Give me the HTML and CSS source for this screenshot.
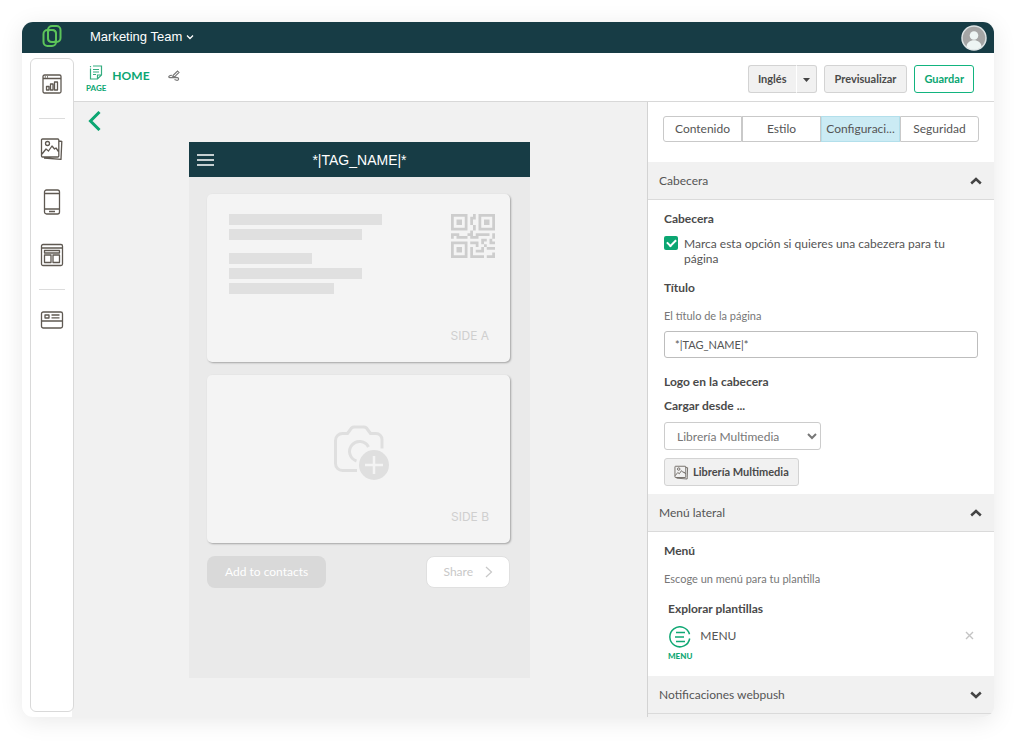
FILE: index.html
```html
<!DOCTYPE html>
<html lang="es">
<head>
<meta charset="utf-8">
<meta name="viewport" content="width=device-width, initial-scale=1">
<title>Marketing Team</title>
<link rel="stylesheet" href="styles.css">
</head>
<body>
<svg class="defs" aria-hidden="true">
  <symbol id="gallery" viewBox="0 0 24 24">
    <path d="M2.500 2h15.300a1 1 0 0 1 1 1v16a1 1 0 0 1-1 1H2.500a1 1 0 0 1-1-1V3a1 1 0 0 1 1-1zM2 17l4-5 2.500 2 3.500-5 2.500 3 1.500-1 2.500 3.500M18.800 4l3 .400-.800 18-17-1.400"/>
    <circle cx="7.500" cy="6.500" r="2"/>
  </symbol>
</svg>
<div class="app">
  <header class="topbar">
    <a class="logo" href="#" aria-label="Inicio">
      <svg width="20" height="24" viewBox="0 0 20 24"><g fill="none" stroke="#5cc45a" stroke-width="2"><rect x="6" y="2" width="12.500" height="16" rx="4"/><rect x="1.500" y="6" width="12.500" height="16" rx="4"/><rect x="6" y="6" width="8" height="12" rx="3" stroke-width="1.500"/></g></svg>
    </a>
    <button class="team" type="button">Marketing Team
      <svg width="8" height="6" viewBox="0 0 8 6"><path d="M1 1.500l3 3 3-3" fill="none" stroke="#fff" stroke-width="1.300"/></svg>
    </button>
    <button class="avatar" type="button" aria-label="Cuenta">
      <svg width="26" height="26" viewBox="0 0 26 26"><circle cx="13" cy="13" r="12" fill="#a5a5a5" stroke="#dce2e3" stroke-width="1.500"/><circle cx="13" cy="10.500" r="4.300" fill="#eef5f4"/><path d="M5.500 22c0-9 15-9 15 0a12 12 0 0 1-15 0z" fill="#eef5f4"/></svg>
    </button>
  </header>

  <div class="body">
    <div class="rail">
      <nav class="tools" aria-label="Herramientas">
        <a href="#" aria-label="Panel"><svg width="20" height="20" viewBox="0 0 20 20"><rect x="1" y="1" width="18" height="18" rx="1.500"/><path d="M1 4.500h18M2.800 2.800h1M5 2.800h1M4.500 12.500h2.500v3.500h-2.500zM8.500 10h2.500v6h-2.500zM12.500 8h3v8h-3z"/></svg></a>
        <hr>
        <a href="#" aria-label="Multimedia"><svg width="24" height="24"><use href="#gallery"/></svg></a>
        <a href="#" aria-label="Móvil"><svg width="18" height="26" viewBox="0 0 18 26"><rect x="1.500" y="1" width="15" height="24" rx="2"/><path d="M1.500 4.500h15M1.500 20h15M6 22.500h6"/></svg></a>
        <a href="#" aria-label="Plantillas"><svg width="24" height="24" viewBox="0 0 24 24"><rect x="1.500" y="1.500" width="21" height="21" rx="1.500"/><path d="M1.500 5h21M4.500 7.500h15v2.500h-15zM4.500 12h6.500v7.500h-6.500zM13 12h6.500v7.500H13z"/></svg></a>
        <hr>
        <a href="#" aria-label="Tarjetas"><svg width="24" height="18" viewBox="0 0 24 18"><rect x="1.500" y="1" width="21" height="16" rx="1.800"/><path d="M1.500 10h21M5 4h4v3h-4zM11.500 4h8M11.500 6.800h8"/></svg></a>
      </nav>
    </div>

    <main class="main">
      <div class="pagebar">
        <div class="page-kind">
          <svg width="14" height="15" viewBox="0 0 14 15"><path d="M4 1h8.500v9l-4 4H1.500V3.500M12.500 10h-4v4M1.500 1v1.200M4 4.500h6M4 7h6M4 9.500h3" fill="none" stroke="#35ad80" stroke-width="1.200"/></svg>
          <span>PAGE</span>
        </div>
        <h1>HOME</h1>
        <button class="edit" type="button" aria-label="Editar nombre"><svg width="12" height="12" viewBox="0 0 12 12"><path d="M5 5.500L9.500 1 11 2.500 6.800 6.600l-2 .400zM4 5.200C1 5.200-.5 7.300 2 7.600l6-.200c3.500 0 3.300 3.400.500 2.900L6.500 9.500" fill="none" stroke="#777" stroke-width="1.100"/></svg></button>
        <div class="actions">
          <div class="split"><button class="btn" type="button">Inglés</button><button class="btn caret" type="button" aria-label="Elegir idioma"><svg width="7" height="4" viewBox="0 0 7 4"><path d="M0 0h7l-3.500 4z" fill="#444"/></svg></button></div>
          <button class="btn" type="button">Previsualizar</button>
          <button class="btn save" type="button">Guardar</button>
        </div>
      </div>

      <div class="workspace">
        <section class="canvas">
          <button class="back" type="button" aria-label="Volver"><svg width="14" height="20" viewBox="0 0 14 20"><path d="M11.500 1L2.500 10l9 9" fill="none" stroke="#0ba672" stroke-width="3"/></svg></button>
          <div class="phone">
            <div class="phone-head">
              <svg width="17" height="12" viewBox="0 0 17 12"><path d="M0 1h17M0 6h17M0 11h17" stroke="#fff" stroke-width="1.400"/></svg>
              <span>*|TAG_NAME|*</span>
            </div>
            <div class="phone-body">
              <article class="card side-a">
                <div class="bars"><i class="w1"></i><i class="w2"></i><i class="w3"></i><i class="w2"></i><i class="w4"></i></div>
                <svg class="qr" width="44" height="44" viewBox="0 0 16 16"><path fill="none" stroke="#cdcdcd" stroke-width="1" d="M.5.500h5v5h-5zM10.500.500h5v5h-5zM.5 10.500h5v5h-5zM2 3h2M2 2.500h2M2 3.500h2M12 2.500h2M12 3.500h2M2 12.500h2M2 13.500h2M8 .500h1M7 1.500h2M7 2.500h1M7 3.500h1M8 4.500h1M8 5.500h1M7 6.500h1M0 7.500h3M6 7.500h2M9 7.500h5M15 7.500h1M0 8.500h1M2 8.500h4M7 8.500h3M15 8.500h1M11 9.500h2M14 9.500h1M7 10.500h3M11 10.500h1M14 10.500h2M9 11.500h1M12 11.500h1M7 12.500h1M11 12.500h1M13 12.500h3M7 13.500h1M9 13.500h3M7 14.500h1M15 14.500h1M7 15.500h5M13 15.500h3"/></svg>
                <span class="side">SIDE A</span>
              </article>
              <article class="card side-b">
                <svg width="56" height="55" viewBox="0 0 56 55"><g fill="none" stroke="#dfdfdf" stroke-width="3"><path d="M24 45.500H9.500a7 7 0 0 1-7-7v-23a7 7 0 0 1 7-7h5l4-5.500q1-1 3-1h9q2 0 3 1l4 5.500h5.500a6 6 0 0 1 6 6V23.500"/><path d="M35.500 22A10 10 0 1 0 23.500 36"/></g><circle cx="41" cy="40" r="15" fill="#dfdfdf"/><path d="M41 31v18M32 40h18" stroke="#f4f4f4" stroke-width="2.500"/></svg>
                <span class="side">SIDE B</span>
              </article>
              <div class="phone-actions">
                <button class="add" type="button">Add to contacts</button>
                <button class="share" type="button">Share <svg width="8" height="12" viewBox="0 0 8 12"><path d="M1 1l5.500 5L1 11" fill="none" stroke="#c8c8c8" stroke-width="1.200"/></svg></button>
              </div>
            </div>
          </div>
        </section>

        <aside class="panel">
          <div class="tabs" role="tablist">
            <button type="button" role="tab">Contenido</button>
            <button type="button" role="tab">Estilo</button>
            <button type="button" role="tab" aria-selected="true" class="active">Configuraci...</button>
            <button type="button" role="tab">Seguridad</button>
          </div>

          <button class="section-head" type="button" aria-expanded="true">Cabecera
            <svg width="12" height="8" viewBox="0 0 12 8"><path d="M1.200 6.500L6 2l4.800 4.500" fill="none" stroke="#444" stroke-width="2.500"/></svg>
          </button>
          <div class="section">
            <h2>Cabecera</h2>
            <label class="check"><input type="checkbox" checked><span>Marca esta opción si quieres una cabezera para tu página</span></label>
            <h2><label for="title">Título</label></h2>
            <p id="title-help">El título de la página</p>
            <input id="title" class="field" type="text" value="*|TAG_NAME|*" aria-describedby="title-help">
            <h2 class="logo-title">Logo en la cabecera</h2>
            <h2 class="source-title"><label for="source">Cargar desde ...</label></h2>
            <select id="source" class="source"><option>Librería Multimedia</option></select>
            <button class="btn library" type="button"><svg width="15" height="15"><use href="#gallery"/></svg>Librería Multimedia</button>
          </div>

          <button class="section-head" type="button" aria-expanded="true">Menú lateral
            <svg width="12" height="8" viewBox="0 0 12 8"><path d="M1.200 6.500L6 2l4.800 4.500" fill="none" stroke="#444" stroke-width="2.500"/></svg>
          </button>
          <div class="section menu-section">
            <h2>Menú</h2>
            <p>Escoge un menú para tu plantilla</p>
            <h2 class="templates">Explorar plantillas</h2>
            <div class="menu-item">
              <div class="menu-icon"><svg width="22" height="22" viewBox="0 0 22 22"><g fill="none" stroke="#10a874" stroke-width="1.500"><path d="M20.500 8.200A10 10 0 1 0 20.700 12.500"/><path d="M7 6.500h9M6 11h9M7 15.500h9" stroke-width="1.700"/></g></svg><span>MENU</span></div>
              <span class="menu-name">MENU</span>
              <button class="remove" type="button" aria-label="Quitar"><svg width="9" height="9" viewBox="0 0 9 9"><path d="M1 1l7 7M8 1l-7 7" stroke="#c4c4c4" stroke-width="1.400"/></svg></button>
            </div>
          </div>

          <button class="section-head" type="button" aria-expanded="false">Notificaciones webpush
            <svg width="12" height="8" viewBox="0 0 12 8"><path d="M1.200 1.500L6 6l4.800-4.500" fill="none" stroke="#444" stroke-width="2.500"/></svg>
          </button>
        </aside>
      </div>
    </main>
  </div>
</div>
</body>
</html>
```
FILE: styles.css
```css
* { box-sizing: border-box; }
body {
  margin: 0;
  min-height: 100vh;
  padding: 22px 26px 27px 22px;
  display: flex;
  background: #fff;
  color: #555;
  font: 12px/16px Lato, sans-serif;
}
button, input, select { font: inherit; color: inherit; margin: 0; }
button { padding: 0; border: 0; background: none; cursor: pointer; }
h1, h2, p { margin: 0; }
svg { display: block; flex: none; }
.defs { position: absolute; width: 0; height: 0; }

.app {
  flex: 1;
  min-width: 0;
  display: flex;
  flex-direction: column;
  border-radius: 11px;
  overflow: hidden;
  background: #fff;
  box-shadow: 0 4px 24px rgba(0, 0, 0, .09);
}

/* Top bar */
.topbar {
  height: 31px;
  display: flex;
  align-items: center;
  padding: 0 7px 0 20px;
  background: #173c45;
}
.logo { margin-bottom: 4px; }
.team {
  display: flex;
  align-items: center;
  gap: 4px;
  margin: 0 auto 2px 28px;
  color: #fff;
  font: 13px/16px "Liberation Sans", Arial, sans-serif;
}

/* Tool rail */
.body { flex: 1; display: flex; }
.rail { width: 50px; flex: none; padding: 5px 0 5px 8px; display: flex; }
.tools {
  position: relative;
  z-index: 1;
  flex: none;
  width: 44px;
  display: flex;
  flex-direction: column;
  align-items: center;
  padding-top: 15px;
  border: 1px solid #d9d9d9;
  border-radius: 6px;
  background: #fff;
}
.tools a { height: 20px; margin-bottom: 33px; display: flex; align-items: center; }
.tools hr { width: 26px; margin: -9px 0 20px; border: 0; border-top: 1px solid #dcdcdc; }
.tools svg, .library svg { fill: none; stroke: #5f5952; stroke-width: 1.300; stroke-linejoin: round; }

/* Page bar */
.main { flex: 1; min-width: 0; display: flex; flex-direction: column; }
.pagebar {
  height: 49px;
  display: flex;
  align-items: center;
  padding: 3px 20px 0 14px;
  border-bottom: 1px solid #d8d8d8;
}
.page-kind { display: flex; flex-direction: column; align-items: center; gap: 3px; color: #0ba672; font-size: 8px; line-height: 10px; font-weight: 700; }
.pagebar h1 { margin: 0 18px 5px 6px; font-size: 12px; line-height: 16px; color: #0ba672; }
.edit { margin-bottom: 5px; }
.actions { margin-left: auto; display: flex; gap: 7px; }
.split { display: flex; }
.btn {
  height: 28px;
  padding: 0 10px;
  border: 1px solid #d3d3d3;
  border-radius: 3px;
  background: #f1f1f1;
  color: #4a4a4a;
  font-size: 11px;
  line-height: 16px;
  font-weight: 700;
}
.split .btn:first-child { padding: 0 9px; border-right-color: #fff; border-radius: 3px 0 0 3px; }
.split .caret { padding: 2px 6px 0; border-left: 0; border-radius: 0 3px 3px 0; }
.btn.save { padding: 0 9px; border-color: #12b47f; background: #fff; color: #0ba672; }

/* Canvas */
.workspace { flex: 1; display: flex; background: #f1f1f1; }
.canvas { flex: 1; position: relative; display: flex; justify-content: center; align-items: flex-start; padding: 40px 20px 20px; }
.back { position: absolute; left: 16px; top: 9px; }
.phone { width: 341px; min-height: 536px; background: #eaeaea; }
.phone-head {
  height: 35px;
  display: grid;
  grid-template-columns: 17px 1fr 17px;
  align-items: center;
  padding: 0 8px;
  background: #173c45;
  color: #fff;
  font: 14px/16px "Liberation Sans", Arial, sans-serif;
  text-align: center;
}
.phone-body { padding: 17px 20px 20px 18px; display: flex; flex-direction: column; gap: 13px; }
.card {
  position: relative;
  height: 168px;
  border-radius: 5px;
  background: #f4f4f4;
  box-shadow: 1px 1px 2px rgba(0, 0, 0, .3);
}
.side-a { display: flex; justify-content: space-between; padding: 20px 15px 0 22px; }
.side-b { display: flex; justify-content: center; padding: 50px 0 0 4px; }
.bars { display: flex; flex-direction: column; gap: 4px; }
.bars i { height: 11px; background: #e0e0e0; }
.w1 { width: 153px; }
.w2 { width: 133px; }
.w3 { width: 83px; margin-top: 9px; }
.w4 { width: 105px; }
.side { position: absolute; right: 21px; bottom: 18px; color: #cfcfcf; font: 12px/16px Inter, sans-serif; }
.phone-actions { display: flex; justify-content: space-between; }
.add, .share { height: 32px; border-radius: 8px; }
.add { padding: 0 18px; background: #d9d9d9; color: #fff; }
.share { display: flex; align-items: center; gap: 12px; padding: 0 16px; border: 1px solid #e0e0e0; background: #fff; color: #c8c8c8; }

/* Settings panel */
.panel { width: 347px; flex: none; border-left: 1px solid #d3d3d3; display: flex; flex-direction: column; }
.tabs { display: grid; grid-template-columns: repeat(4, 1fr); padding: 14px 15px 20px; background: #fff; }
.tabs button { height: 26px; border: 1px solid #c9c9c9; background: #fff; }
.tabs button:first-child { border-radius: 3px 0 0 3px; }
.tabs button:last-child { border-radius: 0 3px 3px 0; }
.tabs .active { border-color: #b3dfeb; background: #cbebf4; }
.section-head {
  height: 38px;
  display: flex;
  align-items: center;
  justify-content: space-between;
  padding: 0 12px 0 11px;
  border-bottom: 1px solid #dadada;
  background: #f1f1f1;
  text-align: left;
}
.section { padding: 11px 16px 8px; background: #fff; }
.section h2 { font-size: 12px; line-height: 16px; color: #4a4a4a; }
.section p { margin: 12px 0 7px; font-size: 11px; line-height: 16px; color: #777; }
.check { display: flex; gap: 6px; margin: 9px 0 14px; line-height: 15px; }
.check input {
  appearance: none;
  flex: none;
  width: 14px;
  height: 14px;
  border-radius: 2px;
  background: #0ba672;
  display: grid;
  place-items: center;
}
.check input:checked::before { content: ""; width: 7px; height: 4px; margin-bottom: 2px; border: solid #fff; border-width: 0 0 2px 2px; rotate: -45deg; }
.field { display: block; width: 100%; height: 27px; padding: 0 10px; border: 1px solid #bdbdbd; border-radius: 3px; background: #fff; font-size: 11px; }
.section .logo-title { margin-top: 16px; }
.section .source-title { margin: 8px 0; }
.source { display: block; width: 157px; height: 28px; padding: 0 0 0 8px; border: 1px solid #ccc; border-radius: 3px; background: #fff; color: #777; }
.library { display: flex; align-items: center; gap: 4px; margin-top: 8px; padding: 0 9px; }
.section .templates { margin: 14px 0 9px 4px; }
.menu-item { display: flex; align-items: flex-start; margin: 0 4px; gap: 8px; }
.menu-icon { display: flex; flex-direction: column; align-items: center; gap: 3px; color: #10a874; font-size: 8px; line-height: 10px; font-weight: 900; }
.menu-name { margin-top: 2px; }
.remove { margin: 5px 0 0 auto; }
.menu-section { padding-bottom: 15px; }
```
